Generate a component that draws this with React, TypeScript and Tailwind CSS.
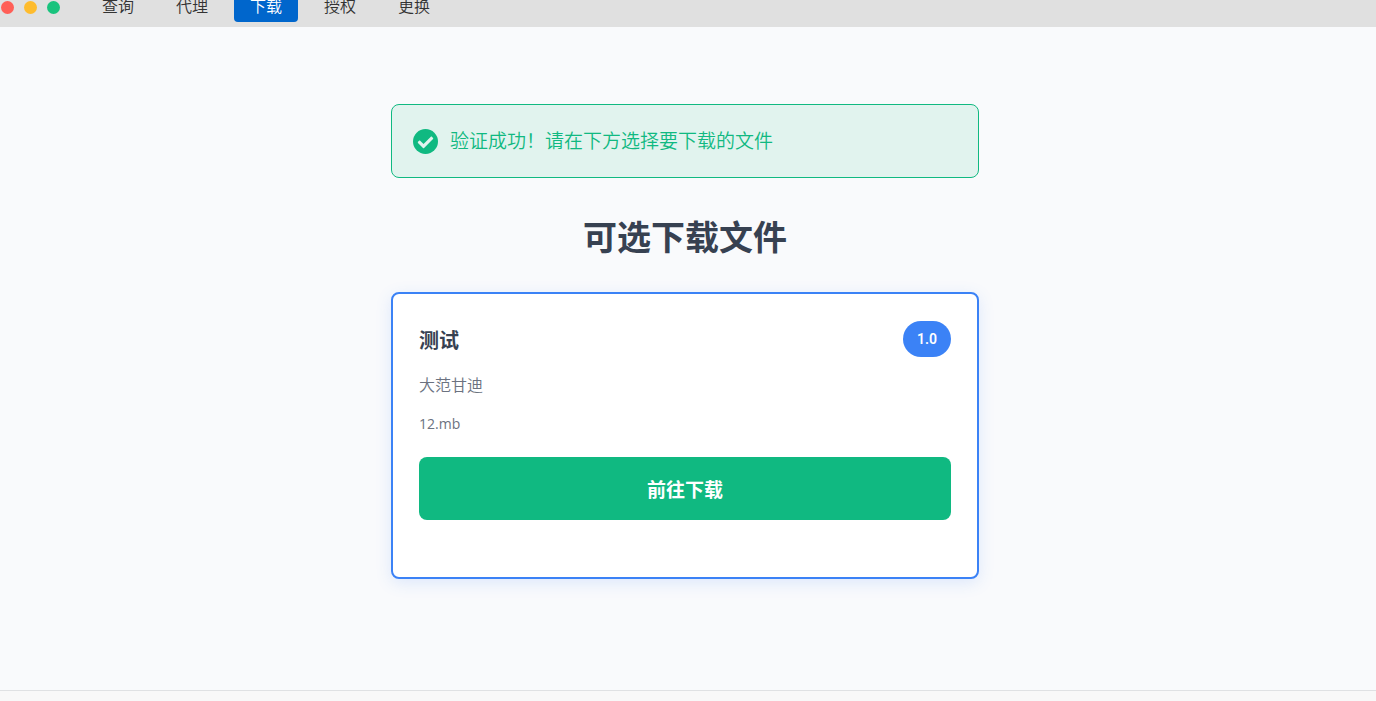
import { useState } from "react";

type DownloadFile = {
  id: number;
  name: string;
  version: string;
  description: string;
  size: string;
};

const navItems: string[] = ["查询", "代理", "下载", "授权", "更换"];

const files: DownloadFile[] = [
  { id: 1, name: "测试", version: "1.0", description: "大范甘迪", size: "12.mb" },
];

type HeaderProps = {
  active: string;
  onSelect: (item: string) => void;
};

const Header: React.FC<HeaderProps> = ({ active, onSelect }) => {
  return (
    <header className="overflow-hidden bg-[#e0e0e0]">
      {/* the bar is scrolled slightly under the top edge of the window */}
      <div className="-mt-2 flex items-center pb-[5px] pl-px">
        <div className="flex gap-[10px]">
          <span className="size-[13px] rounded-full bg-[#ff5f57]" />
          <span className="size-[13px] rounded-full bg-[#febc2e]" />
          <span className="size-[13px] rounded-full bg-[#19c37d]" />
        </div>

        <nav className="ml-[26px] flex gap-[10px]">
          {navItems.map(item => (
            <button
              key={item}
              type="button"
              onClick={() => onSelect(item)}
              className={
                item === active
                  ? "rounded bg-[#0066cc] px-4 pt-[2px] pb-1 text-base leading-6 text-white"
                  : "rounded px-4 pt-[2px] pb-1 text-base leading-6 text-[#333333]"
              }
            >
              {item}
            </button>
          ))}
        </nav>
      </div>
    </header>
  );
};

const SuccessAlert: React.FC<{ message: string }> = ({ message }) => {
  return (
    <div
      role="status"
      className="flex items-center gap-3 rounded-lg border border-[#10b981] bg-[#e1f3ee] px-[21px] py-[22px] text-[19px] leading-7 text-[#10b981]"
    >
      <svg viewBox="0 0 512 512" className="size-[25px] shrink-0" aria-hidden="true">
        <circle cx="256" cy="256" r="256" fill="#10b981" />
        <path
          d="M227 387 410 205c6-6 6-17 0-23l-23-22c-6-7-16-7-22 0L216 309l-69-69c-6-7-16-7-22 0l-23 22c-6 6-6 17 0 23l103 102c6 7 16 7 22 0z"
          fill="#e1f3ee"
        />
      </svg>
      <p>{message}</p>
    </div>
  );
};

const FileCard: React.FC<{ file: DownloadFile }> = ({ file }) => {
  return (
    <article className="rounded-lg border-2 border-[#3b82f6] bg-white px-[26px] pt-[27px] pb-[57px] shadow-[0_4px_16px_rgba(59,130,246,0.15)]">
      <div className="flex items-center justify-between">
        <h3 className="pt-[3px] text-xl font-bold text-[#374151]">{file.name}</h3>
        <span className="rounded-full bg-[#3b82f6] px-[14px] py-2 font-['Roboto','Open_Sans',sans-serif] text-sm leading-5 font-semibold text-white">
          {file.version}
        </span>
      </div>
      <p className="mt-4 text-base text-[#6b7280]">{file.description}</p>
      <p className="mt-[15px] text-sm leading-6 font-normal text-[#6b7280]">{file.size}</p>
      <button
        type="button"
        className="mt-[21px] w-full rounded-lg bg-[#10b981] pt-[19px] pb-4 text-[19px] leading-7 font-bold text-white"
      >
        前往下载
      </button>
    </article>
  );
};

export default function App() {
  const [active, setActive] = useState<string>("下载");

  return (
    <div className="flex min-h-screen flex-col bg-[#f9fafc] font-['Open_Sans','Noto_Sans_CJK_SC',sans-serif] font-[350]">
      <Header active={active} onSelect={setActive} />

      <main className="flex-1 pt-[77px] pr-[6px] pb-8">
        <div className="mx-auto w-full max-w-[588px]">
          <SuccessAlert message="验证成功！请在下方选择要下载的文件" />
          <h2 className="mt-[34px] mb-[30px] text-center text-[34px] leading-[50px] font-bold text-[#374151]">
            可选下载文件
          </h2>
          {files.map(file => (
            <FileCard key={file.id} file={file} />
          ))}
        </div>
      </main>

      <footer className="h-[11px] border-t border-[#dfe1e3] bg-[#f8f8f8]" />
    </div>
  );
}
